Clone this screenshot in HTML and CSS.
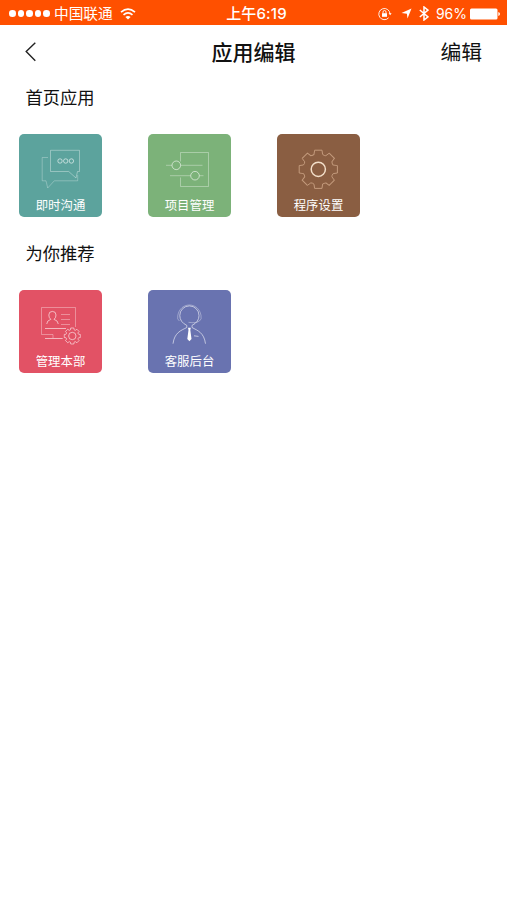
FILE: index.html
```html
<!DOCTYPE html>
<html lang="zh-CN">
<head>
  <meta charset="UTF-8" />
  <meta name="viewport" content="width=device-width, initial-scale=1.0"/>
  <title>应用编辑</title>
  <link rel="stylesheet" href="styles.css">
</head>
<body>
  <div class="status-bar">
    <div class="status-left">
      <div class="signal"><i></i><i></i><i></i><i></i><i></i></div>
      <span class="carrier">中国联通</span>
      <svg class="wifi" width="16" height="12" viewBox="0 0 16 12" fill="none" stroke="#fff" stroke-width="1.7">
        <path d="M1 4.2Q8-1.8 15 4.2M3.5 6.9Q8 3 12.5 6.9" />
        <path d="M8 11.5L5.4 8.9Q8 6.9 10.6 8.9Z" fill="#fff" stroke="none" />
      </svg>
    </div>
    <div class="clock">上午6:19</div>
    <div class="status-right">
      <svg class="lock" width="14" height="14" viewBox="0 0 14 14" fill="none" stroke="#fff" stroke-width=".9">
        <path d="M10.6 10.8A5.6 5.6 0 1 1 12 7" />
        <path d="M10.6 6.3H13.6L12.1 8.3Z" fill="#fff" stroke="none" />
        <rect x="4" y="6.2" width="5" height="3.6" fill="#fff" stroke="none" />
        <path d="M5 6.3V5A1.5 1.5 0 0 1 8 5V6.3" />
      </svg>
      <svg class="location" width="11" height="11" viewBox="0 0 11 11" fill="#fff">
        <path d="M10.5 .5L6.5 10.4L5.9 5.7L.5 5Z" />
      </svg>
      <svg class="bluetooth" width="10" height="15" viewBox="0 0 10 15" fill="none" stroke="#fff" stroke-width="1.5">
        <path d="M.8 4L9 10.8L5 14V1L9 4.2L.8 11" />
      </svg>
      <span class="percent">96%</span>
      <svg class="battery" width="31" height="12" viewBox="0 0 31 12" fill="#fff">
        <rect x="0" y=".5" width="27.5" height="11" rx="1.5" />
        <path d="M28.3 4Q30 4.4 30 6T28.3 8Z" />
      </svg>
    </div>
  </div>

  <header class="nav-bar">
    <button class="back" aria-label="返回">
      <svg width="12" height="20" viewBox="0 0 12 20" fill="none" stroke="#222" stroke-width="1.4">
        <path d="M10.3 .8L1.2 9.5L10.3 18.7" />
      </svg>
    </button>
    <h1>应用编辑</h1>
    <button class="edit">编辑</button>
  </header>

  <section>
    <h2>首页应用</h2>
    <div class="apps">
      <div class="app teal">
        <svg width="83" height="63" viewBox="0 0 83 63">
          <path d="M31.5 16.3H60.5V37.5H58.5L57 44L49.7 37.5H31.5Z" />
          <path class="faint" d="M29 23.5H23.2V46.8H27L28.7 54L35.3 46.8H58.7V41" />
          <g class="bright"><circle cx="41" cy="27" r="2.2" /><circle cx="46.7" cy="27" r="2.2" /><circle cx="52.4" cy="27" r="2.2" /></g>
        </svg>
        <span>即时沟通</span>
      </div>
      <div class="app green">
        <svg width="83" height="63" viewBox="0 0 83 63">
          <path d="M32.5 27.5V18.5H60.5V52.5H32.5V43.5" />
          <path d="M18 31.3H24M32.6 31.3H54.5M22 41.7H42.7M51.3 41.7H55.5" />
          <g class="bright"><circle cx="28.3" cy="31.3" r="4.3" /><circle cx="47" cy="41.7" r="4.3" /></g>
        </svg>
        <span>项目管理</span>
      </div>
      <div class="app brown">
        <svg width="83" height="63" viewBox="0 0 83 63">
          <defs>
            <path id="tooth" d="M-3.7-19.1H3.7L4.3-14.9Q6-13.4 7.5-13.6L10.9-16.1" />
          </defs>
          <g transform="translate(41.3 35.3)">
            <use href="#tooth" />
            <use href="#tooth" transform="rotate(45)" />
            <use href="#tooth" transform="rotate(90)" />
            <use href="#tooth" transform="rotate(135)" />
            <use href="#tooth" transform="rotate(180)" />
            <use href="#tooth" transform="rotate(225)" />
            <use href="#tooth" transform="rotate(270)" />
            <use href="#tooth" transform="rotate(315)" />
            <circle class="hub" r="7.1" />
          </g>
        </svg>
        <span>程序设置</span>
      </div>
    </div>
  </section>

  <section>
    <h2>为你推荐</h2>
    <div class="apps">
      <div class="app red">
        <svg width="83" height="63" viewBox="0 0 83 63">
          <path d="M56.5 37V17.5H22.5V44.5H34V48" />
          <path class="bright" d="M26 38.5H47M26 48.5H43.7" />
          <path class="bright" d="M27.7 34Q28 30.3 31.8 29.4Q29.8 27.7 29.8 25A3.6 3.6 0 0 1 37 25Q37 27.7 35 29.4Q38.9 30.3 39.3 34" />
          <path d="M42 24.5H51M42 29.5H51M42 34.5H51" />
          <g class="bright" transform="translate(53.3 46)">
            <g class="small-gear" transform="scale(.42)">
              <use href="#tooth" />
              <use href="#tooth" transform="rotate(45)" />
              <use href="#tooth" transform="rotate(90)" />
              <use href="#tooth" transform="rotate(135)" />
              <use href="#tooth" transform="rotate(180)" />
              <use href="#tooth" transform="rotate(225)" />
              <use href="#tooth" transform="rotate(270)" />
              <use href="#tooth" transform="rotate(315)" />
            </g>
            <circle r="3.7" />
          </g>
        </svg>
        <span>管理本部</span>
      </div>
      <div class="app blue">
        <svg width="83" height="63" viewBox="0 0 83 63">
          <path class="bright" d="M25 53.7C26.5 42.5 33 40.5 38.8 37.5V35.4Q31.8 32 31.8 25.5A9.6 9.6 0 0 1 51 25.5Q51 32 44 35.4V37.5C49.5 40.5 56 42.5 57.5 53.7" />
          <path d="M31.4 31Q28.8 29.5 29.8 25.5C32 11.5 50.8 11.5 53 25.5Q54 29.5 51.4 31Q48 33.5 40.5 32.3" />
          <path class="tie" d="M40 37.8H42.8L42.3 40L43.5 49L41.4 51.2L39.3 49L40.5 40Z" />
          <path class="bright" d="M46 45.8L50.5 46.4" />
        </svg>
        <span>客服后台</span>
      </div>
    </div>
  </section>
</body>
</html>
```
FILE: styles.css
```css
* {
  margin: 0;
  padding: 0;
  box-sizing: border-box;
  font-family: Inter, 'Noto Sans CJK SC', sans-serif;
}

body {
  background-color: #fff;
  color: #111;
  min-height: 100vh;
}

svg {
  display: block;
  flex: none;
}

button {
  border: none;
  background: none;
  color: inherit;
  cursor: pointer;
}

.status-bar,
.nav-bar {
  display: grid;
  grid-template-columns: 1fr auto 1fr;
  align-items: center;
}

.status-bar {
  height: 25px;
  padding: 2px 6px 0 9px;
  background: #ff5000;
  color: #fff;
  font-size: 14.7px;
  line-height: 22px;
}

.status-left,
.status-right {
  display: flex;
  align-items: center;
}

.status-right {
  justify-content: flex-end;
}

.signal {
  display: flex;
  gap: 2px;
}

.signal i {
  width: 6.6px;
  height: 6.6px;
  border-radius: 50%;
  background: #fff;
}

.carrier {
  margin-left: 4px;
}

.wifi {
  margin-left: 7px;
}

.clock {
  padding-left: 3px;
  font-weight: 500;
  font-size: 15px;
  letter-spacing: 0.15px;
}

.location {
  margin-left: 9px;
}

.bluetooth {
  margin-left: 7px;
}

.percent {
  margin: 0 3px 0 7px;
  font-size: 14px;
}

.nav-bar {
  height: 54px;
  padding: 0 25px;
}

.back {
  justify-self: start;
}

h1 {
  font-size: 21px;
  font-weight: 500;
  line-height: 30px;
  padding-top: 1px;
}

.edit {
  justify-self: end;
  padding-top: 2px;
  font-size: 20.8px;
  line-height: 30px;
}

section {
  height: 156px;
  padding: 6px 19px 0;
}

h2 {
  padding-left: 6.5px;
  font-size: 17.3px;
  font-weight: 400;
  line-height: 26px;
}

.apps {
  display: flex;
  gap: 46px;
  margin-top: 23px;
}

.app {
  width: 83px;
  height: 83px;
  border-radius: 5px;
  color: #fff;
  font-size: 12.4px;
  line-height: 18px;
  text-align: center;
}

.app span {
  display: block;
}

.app svg {
  fill: none;
  stroke: rgba(255, 255, 255, 0.35);
  stroke-width: 1;
}

.app .faint {
  stroke: rgba(255, 255, 255, 0.28);
}

.app .bright {
  stroke: rgba(255, 255, 255, 0.58);
}

.app .hub {
  stroke: #f3dfc9;
  stroke-width: 1.5;
}

.app .small-gear {
  stroke-width: 2.2;
}

.app .tie {
  fill: #fff;
  stroke: none;
}

.teal {
  background: #5ca39d;
}

.green {
  background: #7cb279;
}

.brown {
  background: #8a5e42;
}

.app.brown svg {
  stroke: #c39a7c;
}

.red {
  background: #e25265;
}

.blue {
  background: #6973b0;
}
```
